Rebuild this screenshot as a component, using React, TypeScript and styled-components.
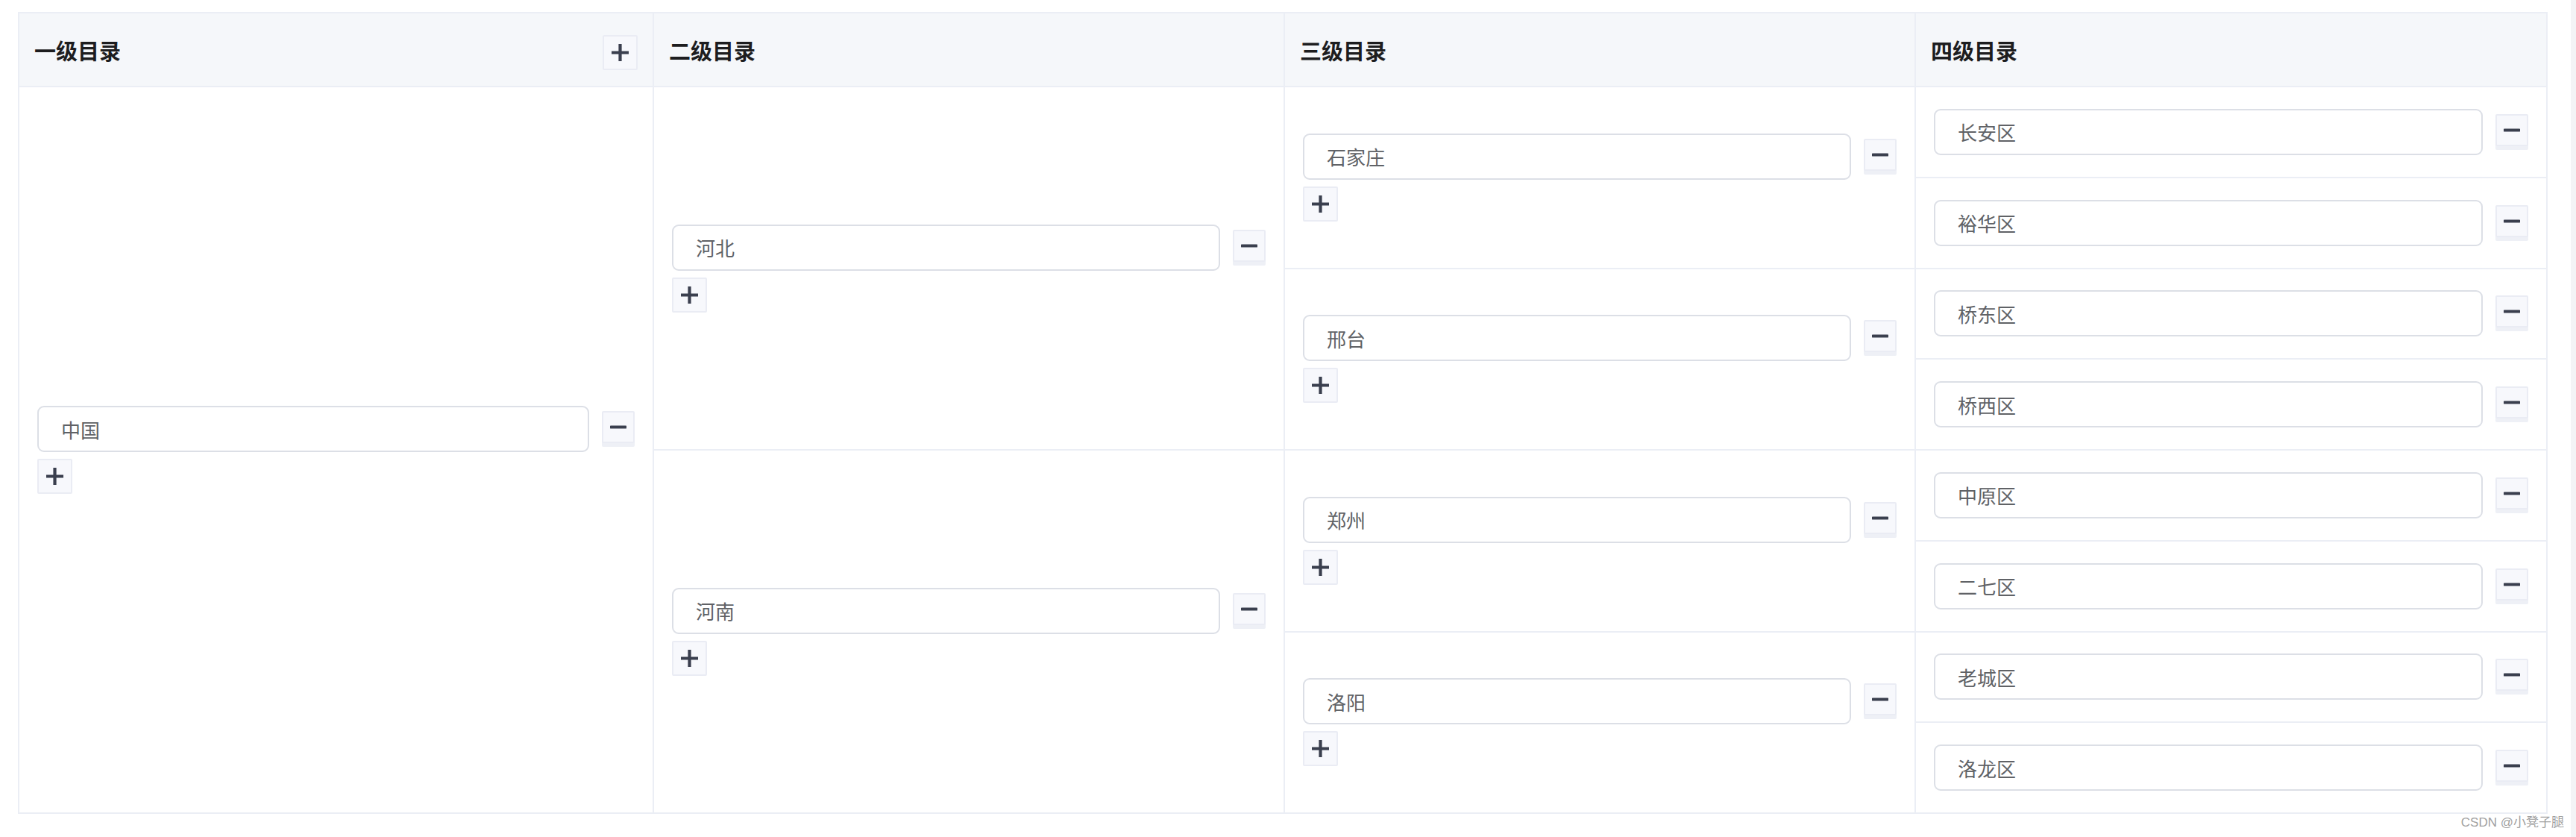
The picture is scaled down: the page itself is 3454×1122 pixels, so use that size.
import React from "react";
import styled, { createGlobalStyle } from "styled-components";

type Node = { name: string; children?: Node[] };

const tree: Node[] = [
  {
    name: "中国",
    children: [
      {
        name: "河北",
        children: [
          { name: "石家庄", children: [{ name: "长安区" }, { name: "裕华区" }] },
          { name: "邢台", children: [{ name: "桥东区" }, { name: "桥西区" }] },
        ],
      },
      {
        name: "河南",
        children: [
          { name: "郑州", children: [{ name: "中原区" }, { name: "二七区" }] },
          { name: "洛阳", children: [{ name: "老城区" }, { name: "洛龙区" }] },
        ],
      },
    ],
  },
];

const headers = ["一级目录", "二级目录", "三级目录", "四级目录"];

const GlobalStyle = createGlobalStyle`
  html, body {
    margin: 0;
    padding: 0;
    background: #ffffff;
  }
  body {
    font-family: "Noto Sans CJK SC", "Noto Sans", sans-serif;
  }
`;

const Page = styled.div`
  box-sizing: border-box;
  min-height: 100vh;
  padding: 16px 0 0 24px;
  border-right: 7px solid #f3f4f6;
`;

const Table = styled.div`
  display: grid;
  grid-template-columns: 851px 846px 846px 847px;
  grid-template-rows: 99px repeat(8, 121.75px);
  width: max-content;
  border-top: 2px solid #ebeef5;
  border-left: 2px solid #ebeef5;
`;

const HeadCell = styled.div`
  box-sizing: border-box;
  display: flex;
  align-items: center;
  justify-content: space-between;
  padding: 0 20px;
  background: #f5f7fa;
  border-right: 2px solid #ebeef5;
  border-bottom: 2px solid #ebeef5;
  font-size: 29px;
  font-weight: 700;
  color: #1d1d1f;
`;

const Cell = styled.div<{ $col: number; $row: number; $span: number }>`
  box-sizing: border-box;
  grid-column: ${(p) => p.$col};
  grid-row: ${(p) => p.$row + 2} / span ${(p) => p.$span};
  display: flex;
  flex-direction: column;
  justify-content: center;
  align-items: flex-start;
  padding: 0 24px;
  border-right: 2px solid #ebeef5;
  border-bottom: 2px solid #ebeef5;
  background: #ffffff;
`;

const InputRow = styled.div`
  display: flex;
  align-items: center;
  gap: 17px;
  width: 100%;
`;

const TextInput = styled.input`
  box-sizing: border-box;
  flex: 1;
  min-width: 0;
  height: 62px;
  padding: 0 30px;
  border: 2px solid #dcdfe6;
  border-radius: 9px;
  background: #ffffff;
  font-family: "Noto Sans CJK SC", "Noto Sans", sans-serif;
  font-size: 26px;
  color: #606266;
  outline: none;
`;

const IconButton = styled.button<{ $shadow?: boolean }>`
  box-sizing: border-box;
  display: flex;
  align-items: center;
  justify-content: center;
  flex: none;
  width: ${(p) => (p.$shadow ? "44px" : "47px")};
  height: ${(p) => (p.$shadow ? "43px" : "47px")};
  margin: ${(p) => (p.$shadow ? "0 0 5px 0" : "0")};
  padding: 0;
  background: #f7f8fc;
  border: 2px solid #eaecf4;
  border-radius: 2px;
  box-shadow: ${(p) => (p.$shadow ? "0 5px 0 #eef0f6" : "none")};
  color: #3a3f4e;
  cursor: pointer;
`;

const HeadButton = styled(IconButton)`
  margin-top: 8px;
`;

const AddButton = styled(IconButton)`
  margin-top: 9px;
`;

const Footer = styled.div`
  display: flex;
  justify-content: flex-end;
  padding: 2px 9px 0 0;
  font-family: "Liberation Sans", "Noto Sans CJK SC", sans-serif;
  font-size: 17px;
  line-height: 20px;
  color: #a0a0a0;
`;

const PlusIcon = () => (
  <svg width="23" height="23" viewBox="0 0 23 23">
    <path d="M11.5 0v23M0 11.5h23" stroke="currentColor" strokeWidth="4.2" fill="none" />
  </svg>
);

const MinusIcon = () => (
  <svg width="22" height="5" viewBox="0 0 22 5">
    <path d="M1.5 2.5h19" stroke="currentColor" strokeWidth="4.2" strokeLinecap="round" fill="none" />
  </svg>
);

type Flat = { name: string; depth: number; row: number; span: number; leaf: boolean };

const countLeaves = (n: Node): number =>
  n.children ? n.children.reduce((s, c) => s + countLeaves(c), 0) : 1;

const flatten = (nodes: Node[], depth: number, start: number, out: Flat[]) => {
  let row = start;
  nodes.forEach((n) => {
    const span = countLeaves(n);
    out.push({ name: n.name, depth, row, span, leaf: !n.children });
    if (n.children) flatten(n.children, depth + 1, row, out);
    row += span;
  });
  return out;
};

export default function App() {
  const cells = flatten(tree, 0, 0, []);

  return (
    <Page>
      <GlobalStyle />
      <Table>
        {headers.map((h, i) => (
          <HeadCell key={h}>
            <span>{h}</span>
            {i === 0 && (
              <HeadButton>
                <PlusIcon />
              </HeadButton>
            )}
          </HeadCell>
        ))}
        {cells.map((c) => (
          <Cell key={c.name} $col={c.depth + 1} $row={c.row} $span={c.span}>
            <InputRow>
              <TextInput defaultValue={c.name} />
              <IconButton $shadow>
                <MinusIcon />
              </IconButton>
            </InputRow>
            {!c.leaf && (
              <AddButton>
                <PlusIcon />
              </AddButton>
            )}
          </Cell>
        ))}
      </Table>
      <Footer>CSDN @小凳子腿</Footer>
    </Page>
  );
}
